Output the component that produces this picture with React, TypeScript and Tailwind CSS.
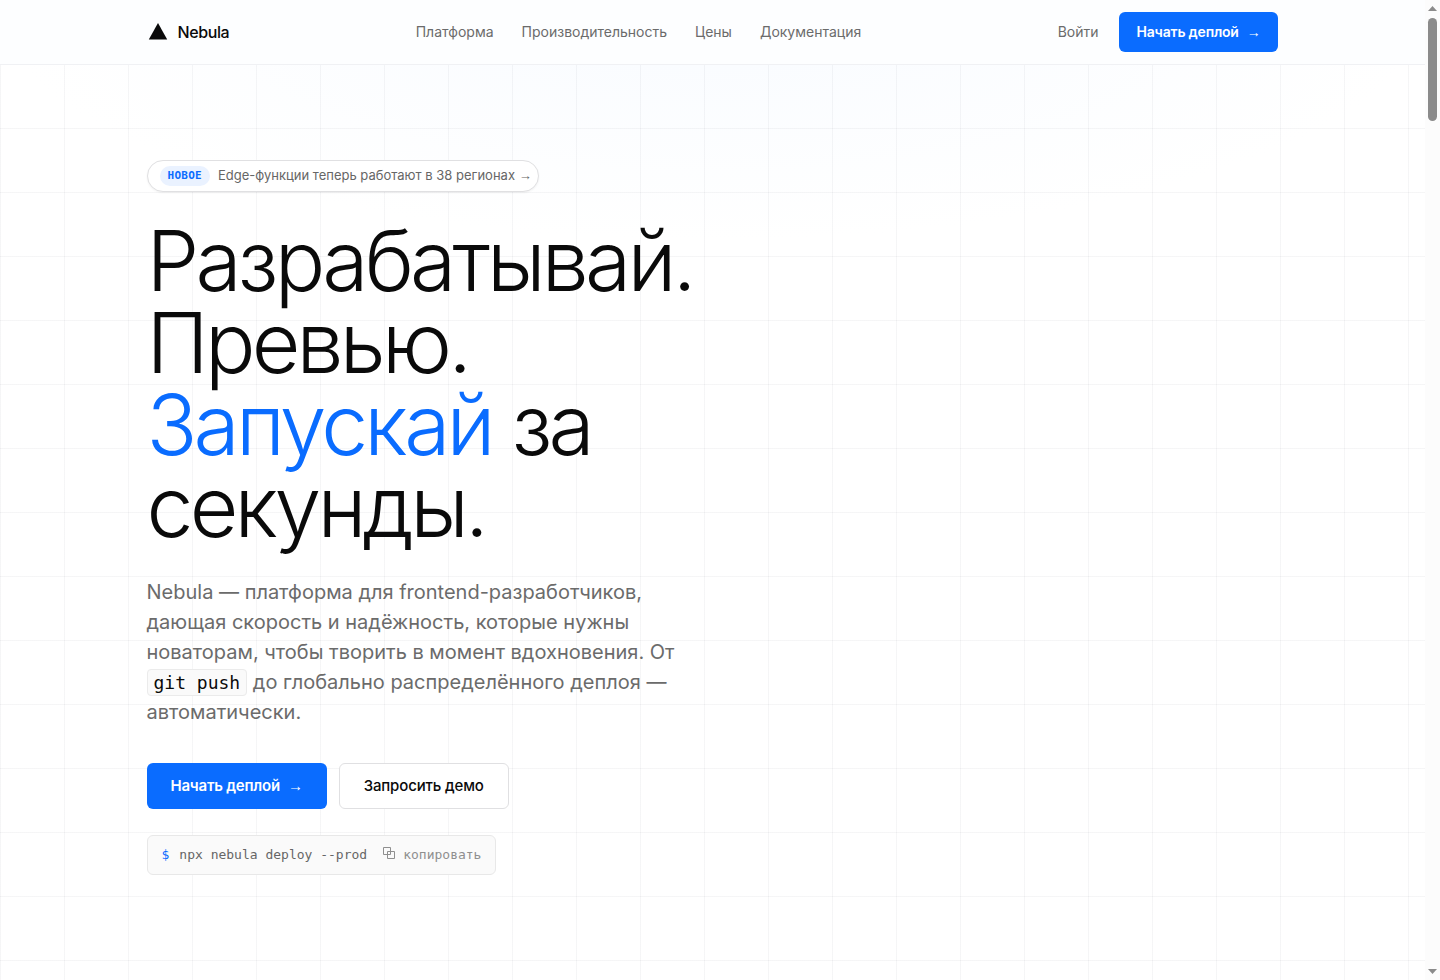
import { useState } from 'react';
import type { ReactNode } from 'react';

const NAV_LINKS = [
  { label: 'Платформа', href: '#platform' },
  { label: 'Производительность', href: '#performance' },
  { label: 'Цены', href: '#pricing' },
  { label: 'Документация', href: '#docs' },
];

const INSTALL_COMMAND = 'npx nebula deploy --prod';

interface PrimaryButtonProps {
  size: 'md' | 'lg';
  children: ReactNode;
}

function Arrow() {
  return (
    <span className="font-['Liberation_Sans',sans-serif]" aria-hidden="true">
      →
    </span>
  );
}

function PrimaryButton({ size, children }: PrimaryButtonProps) {
  return (
    <button
      type="button"
      className={
        size === 'md'
          ? 'h-10 px-[18px] inline-flex items-center gap-2 rounded-md bg-[#0a6cff] text-sm font-semibold tracking-[-0.015em] text-white hover:bg-[#005ae0]'
          : 'h-[46px] px-6 inline-flex items-center gap-2 rounded-md bg-[#0a6cff] text-[15px] font-semibold tracking-[-0.015em] text-white hover:bg-[#005ae0]'
      }
    >
      {children}
      <Arrow />
    </button>
  );
}

function Header() {
  return (
    <header className="border-b border-[#f0f1f4] bg-[#fdfeff]">
      <div className="mx-auto flex h-16 max-w-[1180px] items-center justify-between px-6">
        <a href="#top" className="flex items-center gap-[9px] text-base font-medium tracking-tight text-[#0a0a0a]">
          <svg viewBox="0 0 22 22" className="h-[22px] w-[22px]" aria-hidden="true">
            <path d="M11 2 20.2 18.4H1.8Z" fill="currentColor" />
          </svg>
          Nebula
        </a>

        <nav className="flex items-center gap-7">
          {NAV_LINKS.map((link) => (
            <a key={link.href} href={link.href} className="text-sm text-[#6b6b6b] hover:text-black">
              {link.label}
            </a>
          ))}
        </nav>

        <div className="flex items-center gap-2.5">
          <a href="#login" className="px-2.5 text-sm text-[#6b6b6b] hover:text-black">
            Войти
          </a>
          <PrimaryButton size="md">Начать деплой</PrimaryButton>
        </div>
      </div>
    </header>
  );
}

function CopyCommand() {
  const [copied, setCopied] = useState(false);

  const handleCopy = async () => {
    await navigator.clipboard.writeText(INSTALL_COMMAND);
    setCopied(true);
    setTimeout(() => setCopied(false), 2000);
  };

  return (
    <div className="mt-[26px] inline-flex h-10 items-center rounded-md border border-[#e8e8e8] bg-[#fafafa] px-3.5 font-['DejaVu_Sans_Mono',monospace] text-[13px] text-[#666]">
      <span className="mr-2.5 text-[#0a6cff]">$</span>
      <code className="font-['DejaVu_Sans_Mono',monospace]">{INSTALL_COMMAND}</code>
      <button type="button" onClick={handleCopy} className="ml-4 inline-flex items-center gap-2 text-[#8f8f8f] hover:text-black">
        <svg viewBox="0 0 12 12" className="h-3 w-3 -translate-y-0.5" fill="none" stroke="currentColor" aria-hidden="true">
          <path d="M.5.5h7v7h-7zM4.5 4.5h7v7h-7z" />
        </svg>
        {copied ? 'готово' : 'копировать'}
      </button>
    </div>
  );
}

function Hero() {
  return (
    <main className="mx-auto max-w-[1180px] px-6 pt-[95px] pb-[104px]">
      <div className="flex max-w-[570px] flex-col items-start">
        <a
          href="#edge"
          className="inline-flex h-8 items-center gap-2 rounded-full border border-[#e0e0e2] bg-white pr-1.5 pl-3 text-[13px] text-[#666] shadow-xs"
        >
          <span className="rounded-full bg-[#eaf2ff] px-2 font-['DejaVu_Sans_Mono',monospace] text-[11px] leading-5 font-bold tracking-wide text-[#0a6cff]">
            НОВОЕ
          </span>
          <span>
            Edge-функции теперь работают в 38 регионах <Arrow />
          </span>
        </a>

        <h1 className="mt-7 text-[84px] leading-[82px] font-light tracking-[-0.045em] text-[#0a0a0a]">
          Разрабатывай.
          <br />
          Превью.
          <br />
          <span className="text-[#0a6cff]">Запускай</span> за секунды.
        </h1>

        <p className="mt-[29px] max-w-[540px] text-xl leading-[30px] text-[#6b6b6b]">
          Nebula — платформа для frontend-разработчиков, дающая скорость и надёжность, которые нужны новаторам, чтобы
          творить в момент вдохновения. От{' '}
          <code className="rounded-sm border border-[#ebebeb] bg-[#fafafa] px-1.5 py-0.5 font-['DejaVu_Sans_Mono',monospace] text-lg leading-none text-[#0a0a0a]">
            git push
          </code>{' '}
          до глобально распределённого деплоя — автоматически.
        </p>

        <div className="mt-9 flex gap-3">
          <PrimaryButton size="lg">Начать деплой</PrimaryButton>
          <button
            type="button"
            className="h-[46px] rounded-md border border-[#e0e0e2] bg-white px-6 text-[15px] font-medium tracking-[-0.01em] text-[#0a0a0a] hover:bg-[#fafafa]"
          >
            Запросить демо
          </button>
        </div>

        <CopyCommand />
      </div>
    </main>
  );
}

function ScrollRail() {
  return (
    <div className="sticky top-0 flex h-screen w-[15px] shrink-0 flex-col items-center bg-[#fcfcfc] py-1.5" aria-hidden="true">
      <svg viewBox="0 0 9 5" className="h-[5px] w-[9px]" fill="#8b8b8b">
        <path d="M4.5 0 9 5H0Z" />
      </svg>
      <div className="mt-[7px] h-[103px] w-[9px] rounded-full bg-[#8b8b8b]" />
      <svg viewBox="0 0 9 5" className="mt-auto h-[5px] w-[9px]" fill="#8b8b8b">
        <path d="M0 0h9L4.5 5Z" />
      </svg>
    </div>
  );
}

export default function App() {
  return (
    <div className="flex min-h-screen bg-white font-['Inter',sans-serif]">
      <div
        id="top"
        className="min-w-0 flex-1 bg-[linear-gradient(to_right,rgba(10,20,40,0.04)_1px,transparent_1px),linear-gradient(to_bottom,rgba(10,20,40,0.04)_1px,transparent_1px),radial-gradient(ellipse_720px_240px_at_50%_0,#f8fbff,#ffffff)] bg-[size:64px_64px,64px_64px,100%_100%]"
      >
        <Header />
        <Hero />
      </div>
      <ScrollRail />
    </div>
  );
}
